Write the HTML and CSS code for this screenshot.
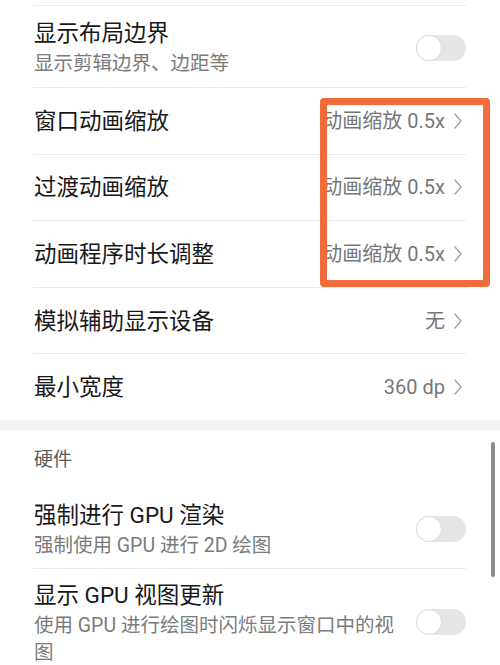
FILE: index.html
```html
<!DOCTYPE html>
<html lang="zh-CN">
<head>
<meta charset="utf-8">
<title>开发者选项</title>
<link rel="stylesheet" href="styles.css">
</head>
<body>
<div class="page">
  <div class="group">
    <div class="item item-two">
      <div class="texts">
        <div class="title">显示布局边界</div>
        <div class="sub">显示剪辑边界、边距等</div>
      </div>
      <div class="toggle"><div class="knob"></div></div>
    </div>
    <div class="item item-one">
      <div class="title">窗口动画缩放</div>
      <div class="value"><span>动画缩放 0.5x</span><svg class="chev" viewBox="0 0 8 16" width="8" height="16"><path d="M1 1 L7 8 L1 15" fill="none" stroke="#a3a3a3" stroke-width="1.4" stroke-linecap="round" stroke-linejoin="round"/></svg></div>
    </div>
    <div class="item item-one">
      <div class="title">过渡动画缩放</div>
      <div class="value"><span>动画缩放 0.5x</span><svg class="chev" viewBox="0 0 8 16" width="8" height="16"><path d="M1 1 L7 8 L1 15" fill="none" stroke="#a3a3a3" stroke-width="1.4" stroke-linecap="round" stroke-linejoin="round"/></svg></div>
    </div>
    <div class="item item-one">
      <div class="title">动画程序时长调整</div>
      <div class="value"><span>动画缩放 0.5x</span><svg class="chev" viewBox="0 0 8 16" width="8" height="16"><path d="M1 1 L7 8 L1 15" fill="none" stroke="#a3a3a3" stroke-width="1.4" stroke-linecap="round" stroke-linejoin="round"/></svg></div>
    </div>
    <div class="item item-one">
      <div class="title">模拟辅助显示设备</div>
      <div class="value"><span>无</span><svg class="chev" viewBox="0 0 8 16" width="8" height="16"><path d="M1 1 L7 8 L1 15" fill="none" stroke="#a3a3a3" stroke-width="1.4" stroke-linecap="round" stroke-linejoin="round"/></svg></div>
    </div>
    <div class="item item-one">
      <div class="title">最小宽度</div>
      <div class="value"><span>360 dp</span><svg class="chev" viewBox="0 0 8 16" width="8" height="16"><path d="M1 1 L7 8 L1 15" fill="none" stroke="#a3a3a3" stroke-width="1.4" stroke-linecap="round" stroke-linejoin="round"/></svg></div>
    </div>
  </div>

  <div class="band"></div>

  <div class="group">
    <div class="header">硬件</div>
    <div class="item item-two item-first">
      <div class="texts">
        <div class="title">强制进行 GPU 渲染</div>
        <div class="sub">强制使用 GPU 进行 2D 绘图</div>
      </div>
      <div class="toggle"><div class="knob"></div></div>
    </div>
    <div class="item item-two item-last">
      <div class="texts">
        <div class="title">显示 GPU 视图更新</div>
        <div class="sub">使用 GPU 进行绘图时闪烁显示窗口中的视图</div>
      </div>
      <div class="toggle"><div class="knob"></div></div>
    </div>
  </div>

  <div class="highlight"></div>
  <div class="scrollbar"></div>
</div>
</body>
</html>
```

FILE: styles.css
```css
html, body {
  margin: 0;
  padding: 0;
  background: #ffffff;
}

body {
  font-family: Roboto, "Noto Sans CJK SC", sans-serif;
  color: #1b1b1b;
}

.page {
  position: relative;
  width: 500px;
  height: 665px;
  overflow: hidden;
  padding-top: 5px;
  box-sizing: border-box;
}

.group {
  margin: 0 34px 0 33px;
}

.item {
  display: flex;
  align-items: center;
  justify-content: space-between;
  border-top: 1px solid #ebebeb;
  box-sizing: border-box;
}

.item-one {
  height: 66.6px;
}

.item-two {
  padding: 12px 0 10px 1px;
}

.item-one .title {
  padding-left: 1px;
}

.item-first {
  border-top: none;
  padding-top: 12px;
  padding-bottom: 9px;
}

.item-last {
  padding-top: 11px;
  padding-bottom: 0;
  align-items: flex-start;
}

.item-last .toggle {
  margin-top: 29px;
}

.texts {
  display: flex;
  flex-direction: column;
  width: 368px;
}

.title {
  font-size: 22.5px;
  line-height: 30px;
  color: #181818;
}

.sub {
  margin-top: 2px;
  font-size: 19.5px;
  line-height: 27px;
  color: #7b7b7b;
}

.value {
  display: flex;
  align-items: center;
  gap: 9px;
  font-size: 20px;
  line-height: 28px;
  color: #777777;
  padding-right: 4px;
}

.chev {
  display: block;
}

.toggle {
  position: relative;
  width: 50px;
  height: 26px;
  border-radius: 13px;
  background: #e6e6e6;
  flex: none;
}

.knob {
  position: absolute;
  left: 0;
  top: 0;
  width: 24px;
  height: 24px;
  border-radius: 50%;
  background: #ffffff;
  border: 1px solid #dedede;
}

.band {
  height: 10px;
  background: #f3f3f3;
}

.header {
  padding: 17px 0 15px 1px;
  font-size: 19px;
  line-height: 26px;
  color: #5a5a5a;
}

.highlight {
  position: absolute;
  left: 320px;
  top: 98px;
  width: 170px;
  height: 189px;
  box-sizing: border-box;
  border: 7.5px solid #f26b3b;
  border-radius: 4px;
}

.scrollbar {
  position: absolute;
  left: 491px;
  top: 442px;
  width: 4px;
  height: 135px;
  border-radius: 2px;
  background: #8c8c8c;
}
```
